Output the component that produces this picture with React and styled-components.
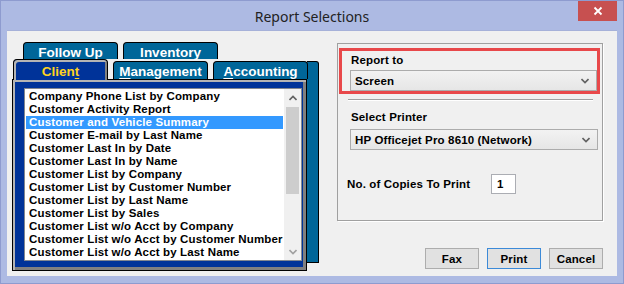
import React from "react";
import styled, { createGlobalStyle, css } from "styled-components";

const Global = createGlobalStyle`
  html, body { margin: 0; padding: 0; overflow: hidden; background: #fff; }
  * { box-sizing: border-box; }
`;

const uiFont = css`
  font-family: "Liberation Sans", Arial, sans-serif;
  font-weight: bold;
  font-size: 11.5px;
  letter-spacing: 0.15px;
  color: #000;
`;

const Window = styled.div`
  width: 624px;
  height: 284px;
  background: #adbae3;
  border: 1px solid #8e9bcf;
  padding: 0 6px 7px 6px;
  display: flex;
  flex-direction: column;
`;

const TitleBar = styled.div`
  height: 29px;
  display: grid;
  grid-template-columns: 1fr auto 1fr;
  align-items: center;
`;

const Title = styled.div`
  grid-column: 2;
  font-family: "Noto Sans", "Open Sans", sans-serif;
  font-size: 14px;
  color: #222;
  padding-top: 1px;
`;

const CloseButton = styled.div`
  grid-column: 3;
  justify-self: end;
  align-self: start;
  width: 39px;
  height: 20px;
  background: #c75050;
  display: flex;
  align-items: center;
  justify-content: center;
`;

const Client = styled.div`
  flex: 1;
  background: #f0f0f0;
  border-top: 1px solid #a6b1d9;
  display: flex;
  padding: 11px 14px 5px 5px;
`;

const TabArea = styled.div`
  width: 307px;
  display: flex;
  flex-direction: column;
`;

const TabRow = styled.div`
  display: flex;
  gap: 5px;
  padding-left: ${(p) => p.$indent || 0}px;
  align-items: flex-end;
  height: ${(p) => p.$height}px;
`;

const Tab = styled.div`
  width: 95px;
  height: ${(p) => p.$h}px;
  background: ${(p) => (p.$active ? "#003399" : "#006699")};
  border: 1px solid #000;
  border-bottom: none;
  border-radius: 4px 4px 0 0;
  color: ${(p) => (p.$active ? "#ffd21f" : "#fff")};
  font-family: "Liberation Sans", Arial, sans-serif;
  font-weight: bold;
  font-size: 13.5px;
  text-align: center;
  line-height: 15px;
  padding-top: ${(p) => p.$pt}px;
  position: relative;
  z-index: ${(p) => (p.$active ? 2 : 1)};
  margin-bottom: ${(p) => (p.$active ? -1 : 0)}px;
  ${(p) =>
    p.$active &&
    css`
      box-shadow: inset 2px 2px 0 #b4b4b4, inset -2px 0 0 #808080;
    `}
  u { text-decoration: underline; text-underline-offset: 2px; }
`;

const PanelRow = styled.div`
  display: flex;
  align-items: flex-start;
  flex: 1;
`;

const Panel = styled.div`
  width: 295px;
  height: 192px;
  background: #003399;
  border: 1px solid #000;
  box-shadow: inset 2px 2px 0 #b4b4b4, inset -3px -3px 0 #808080;
  padding: 8px 4px 9px 11px;
  display: flex;
`;

const SideEdge = styled.div`
  width: 12px;
  height: 202px;
  margin-top: -18px;
  background: #006699;
  border: 1px solid #000;
  border-left: none;
  border-radius: 0 3px 0 0;
`;

const ListBox = styled.div`
  flex: 1;
  background: #fff;
  border: 1px solid #828790;
  display: flex;
`;

const Rows = styled.div`
  flex: 1;
  padding: 1px 1px 0 1px;
  overflow: hidden;
`;

const Row = styled.div`
  ${uiFont};
  height: 13px;
  line-height: 13px;
  padding-left: 3px;
  white-space: nowrap;
  background: ${(p) => (p.$selected ? "#3399ff" : "transparent")};
  color: ${(p) => (p.$selected ? "#fff" : "#000")};
`;

const ScrollBar = styled.div`
  width: 17px;
  background: #f0f0f0;
  display: flex;
  flex-direction: column;
`;

const ScrollButton = styled.div`
  height: 17px;
  display: flex;
  align-items: center;
  justify-content: center;
`;

const Track = styled.div`
  flex: 1;
  padding: 1px 2px 0 2px;
`;

const Thumb = styled.div`
  height: 87px;
  background: #cdcdcd;
`;

const RightCol = styled.div`
  width: 266px;
  margin-left: 18px;
  margin-top: 1px;
  display: flex;
  flex-direction: column;
`;

const Group = styled.div`
  height: 178px;
  border: 1px solid #a0a0a0;
  box-shadow: 1px 1px 0 #fff;
  display: flex;
  flex-direction: column;
`;

const ReportTo = styled.div`
  margin: 4px 2px 0 1px;
  border: 3px solid #e8484a;
  padding: 2px 0 0 8px;
  display: flex;
  flex-direction: column;
`;

const Label = styled.div`
  ${uiFont};
  line-height: 14px;
  margin-left: ${(p) => p.$ml || 0}px;
  margin-top: ${(p) => p.$mt || 0}px;
`;

const Select = styled.div`
  ${uiFont};
  height: 21px;
  border: 1px solid #acacac;
  background: linear-gradient(#f2f2f2, #e6e6e6);
  display: flex;
  align-items: center;
  justify-content: space-between;
  padding: 0 7px 0 4px;
  margin-top: ${(p) => p.$mt || 0}px;
  margin-left: ${(p) => p.$ml || 0}px;
  width: ${(p) => (p.$w ? p.$w + "px" : "auto")};
`;

const Separator = styled.div`
  height: 2px;
  margin: 5px 9px 0 10px;
  border-top: 1px solid #a0a0a0;
  border-bottom: 1px solid #fff;
`;

const CopiesRow = styled.div`
  display: grid;
  grid-template-columns: 144px 25px;
  align-items: center;
  margin: 24px 0 0 9px;
`;

const Input = styled.div`
  ${uiFont};
  height: 20px;
  background: #fff;
  border: 1px solid #abadb3;
  padding: 2px 0 0 5px;
  line-height: 14px;
`;

const ButtonRow = styled.div`
  display: flex;
  justify-content: flex-end;
  gap: 8px;
  margin-top: 27px;
`;

const Button = styled.div`
  ${uiFont};
  width: 54px;
  height: 21px;
  background: #e1e1e1;
  border: 1px solid ${(p) => (p.$focused ? "#3c8ad8" : "#adadad")};
  display: flex;
  align-items: center;
  justify-content: center;
`;

const Chevron = ({ up, color = "#606060" }) => (
  <svg width="8" height="6" viewBox="0 0 8 6">
    <path
      d={up ? "M0.5 5 L4 1.5 L7.5 5" : "M0.5 1 L4 4.5 L7.5 1"}
      fill="none"
      stroke={color}
      strokeWidth="1.6"
    />
  </svg>
);

const reports = [
  "Company Phone List by Company",
  "Customer Activity Report",
  "Customer and Vehicle Summary",
  "Customer E-mail by Last Name",
  "Customer Last In by Date",
  "Customer Last In by Name",
  "Customer List by Company",
  "Customer List by Customer Number",
  "Customer List by Last Name",
  "Customer List by Sales",
  "Customer List w/o Acct by Company",
  "Customer List w/o Acct by Customer Number",
  "Customer List w/o Acct by Last Name",
];

export default function App() {
  return (
    <Window>
      <Global />
      <TitleBar>
        <Title>Report Selections</Title>
        <CloseButton>
          <svg width="10" height="10" viewBox="0 0 10 10">
            <path d="M1.5 1.5 L8.5 8.5 M8.5 1.5 L1.5 8.5" stroke="#fff" strokeWidth="1.8" />
          </svg>
        </CloseButton>
      </TitleBar>
      <Client>
        <TabArea>
          <TabRow $indent={11} $height={17}>
            <Tab $h={17} $pt={2}>
              <u>F</u>ollow Up
            </Tab>
            <Tab $h={17} $pt={2}>
              <u>I</u>nventory
            </Tab>
          </TabRow>
          <TabRow $indent={1} $height={20}>
            <Tab $active $h={21} $pt={4}>
              Clien<u>t</u>
            </Tab>
            <Tab $h={18} $pt={2}>
              <u>M</u>anagement
            </Tab>
            <Tab $h={18} $pt={2}>
              <u>A</u>ccounting
            </Tab>
          </TabRow>
          <PanelRow>
            <Panel>
              <ListBox>
                <Rows>
                  {reports.map((r, i) => (
                    <Row key={r} $selected={i === 2}>
                      {r}
                    </Row>
                  ))}
                </Rows>
                <ScrollBar>
                  <ScrollButton>
                    <Chevron up />
                  </ScrollButton>
                  <Track>
                    <Thumb />
                  </Track>
                  <ScrollButton>
                    <Chevron color="#a0a0a0" />
                  </ScrollButton>
                </ScrollBar>
              </ListBox>
            </Panel>
            <SideEdge />
          </PanelRow>
        </TabArea>
        <RightCol>
          <Group>
            <ReportTo>
              <Label $ml={1}>Report to</Label>
              <Select $mt={3}>
                <span>Screen</span>
                <Chevron />
              </Select>
            </ReportTo>
            <Separator />
            <Label $ml={13} $mt={9}>Select Printer</Label>
            <Select $mt={5} $ml={12} $w={248}>
              <span>HP Officejet Pro 8610 (Network)</span>
              <Chevron />
            </Select>
            <CopiesRow>
              <Label>No. of Copies To Print</Label>
              <Input>1</Input>
            </CopiesRow>
          </Group>
          <ButtonRow>
            <Button>Fax</Button>
            <Button $focused>Print</Button>
            <Button>Cancel</Button>
          </ButtonRow>
        </RightCol>
      </Client>
    </Window>
  );
}
